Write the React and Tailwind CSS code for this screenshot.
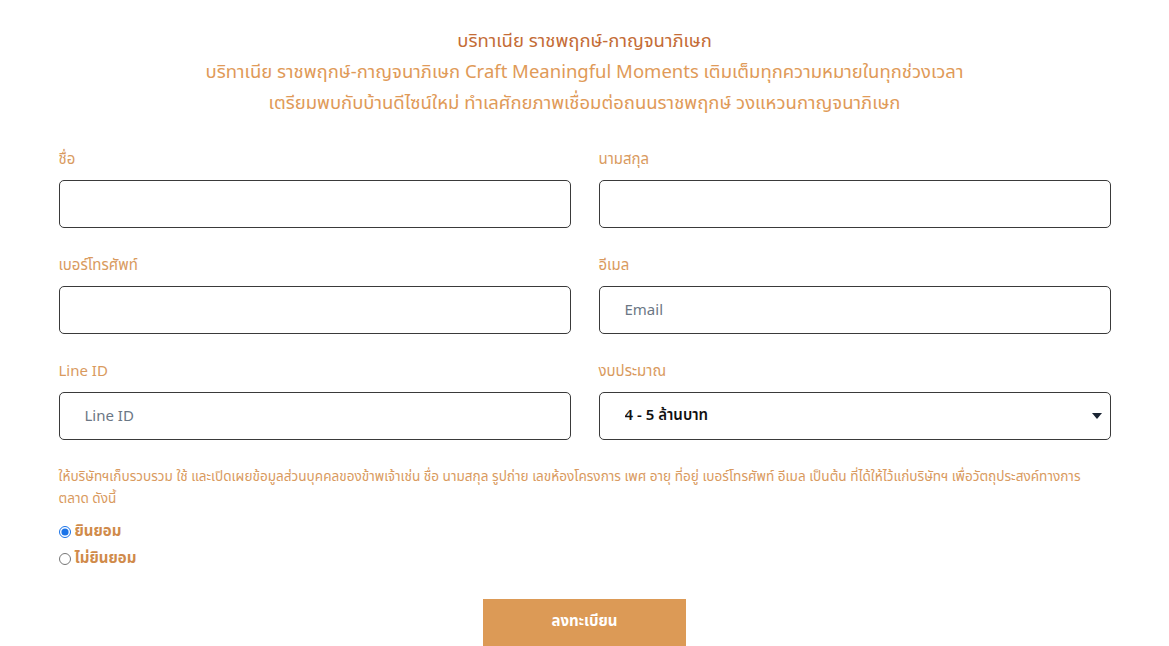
import React, { useState } from 'react';

const font = { fontFamily: '"Noto Sans Thai", "Noto Sans", "Liberation Sans", sans-serif' };

const Field = ({ label, placeholder }) => (
    <div className="flex flex-col">
        <label className="text-[15px] leading-[20px] text-[#d99a5e] mb-[10px]">{label}</label>
        <input
            type="text"
            placeholder={placeholder}
            className="h-[48px] w-full rounded-[5px] border border-[#3a3a3a] px-[25px] text-[15px] text-gray-800 placeholder:text-[#6b7785] outline-none"
        />
    </div>
);

const App = () => {
    const [consent, setConsent] = useState('yes');

    return (
        <div className="min-h-screen bg-white" style={font}>
            <div className="w-[1052px] mx-auto pt-[26px]">
                {/* Header */}
                <div className="text-center text-[18.5px] leading-[31px]">
                    <h1 className="text-[#c46c36]">บริทาเนีย ราชพฤกษ์-กาญจนาภิเษก</h1>
                    <p className="text-[#e09a58]">บริทาเนีย ราชพฤกษ์-กาญจนาภิเษก Craft Meaningful Moments เติมเต็มทุกความหมายในทุกช่วงเวลา</p>
                    <p className="text-[#e09a58]">เตรียมพบกับบ้านดีไซน์ใหม่ ทำเลศักยภาพเชื่อมต่อถนนราชพฤกษ์ วงแหวนกาญจนาภิเษก</p>
                </div>

                {/* Form */}
                <div className="grid grid-cols-2 gap-x-[28px] gap-y-[28px] mt-[31px]">
                    <Field label="ชื่อ" />
                    <Field label="นามสกุล" />
                    <Field label="เบอร์โทรศัพท์" />
                    <Field label="อีเมล" placeholder="Email" />
                    <Field label="Line ID" placeholder="Line ID" />
                    <div className="flex flex-col">
                        <label className="text-[15px] leading-[20px] text-[#d99a5e] mb-[10px]">งบประมาณ</label>
                        <div className="relative">
                            <select className="appearance-none h-[48px] w-full rounded-[5px] border border-[#3a3a3a] bg-white px-[25px] text-[15px] font-semibold text-[#111] outline-none">
                                <option>4 - 5 ล้านบาท</option>
                            </select>
                            <span className="pointer-events-none absolute right-[9px] top-[21px] border-x-[5px] border-t-[6px] border-x-transparent border-t-[#1a2433]"></span>
                        </div>
                    </div>
                </div>

                {/* Consent */}
                <p className="mt-[26px] text-[13.6px] leading-[22px] text-[#d99a5e]">
                    ให้บริษัทฯเก็บรวบรวม ใช้ และเปิดเผยข้อมูลส่วนบุคคลของข้าพเจ้าเช่น ชื่อ นามสกุล รูปถ่าย เลขห้องโครงการ เพศ อายุ ที่อยู่ เบอร์โทรศัพท์ อีเมล เป็นต้น ที่ได้ให้ไว้แก่บริษัทฯ เพื่อวัตถุประสงค์ทางการตลาด ดังนี้
                </p>
                <div className="mt-[11px] flex flex-col gap-[5px]">
                    <label className="flex items-center gap-[4px] text-[15px] leading-[22px] font-bold text-[#d08a4a]">
                        <input type="radio" name="consent" checked={consent === 'yes'} onChange={() => setConsent('yes')} className="w-[12px] h-[12px] accent-[#1a73e8]" />
                        ยินยอม
                    </label>
                    <label className="flex items-center gap-[4px] text-[15px] leading-[22px] font-bold text-[#d08a4a]">
                        <input type="radio" name="consent" checked={consent === 'no'} onChange={() => setConsent('no')} className="w-[12px] h-[12px]" />
                        ไม่ยินยอม
                    </label>
                </div>

                <div className="flex justify-center mt-[29px]">
                    <button className="w-[203px] h-[47px] bg-[#dc9a56] text-white text-[15px] font-bold">ลงทะเบียน</button>
                </div>
            </div>
        </div>
    );
};

export default App;
